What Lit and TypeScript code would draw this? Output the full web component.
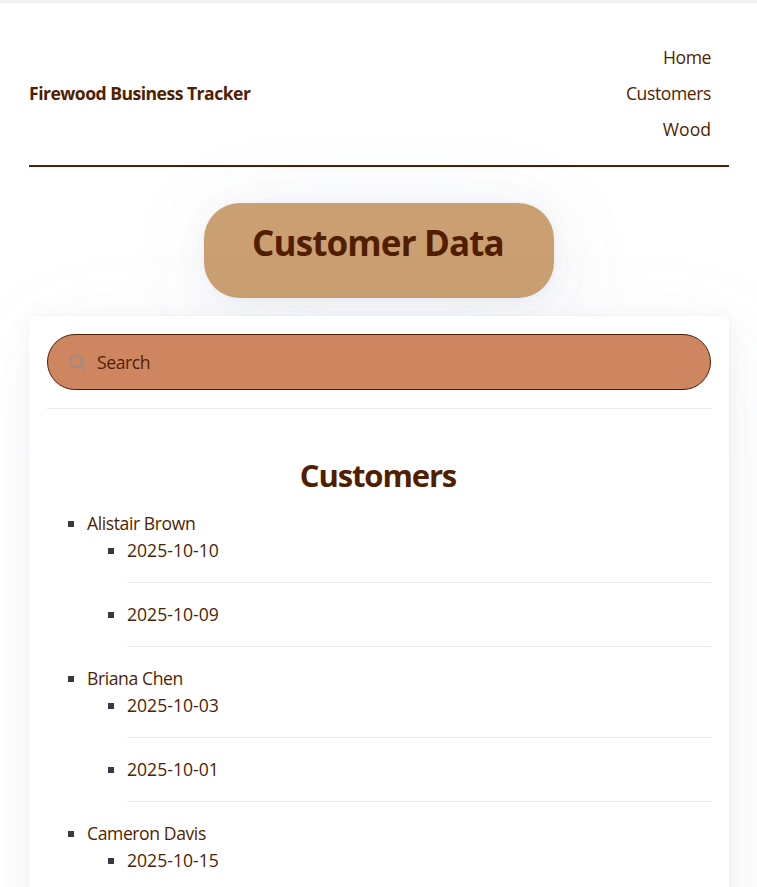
import { LitElement, html, css } from "lit";
import { customElement } from "lit/decorators.js";

interface Customer {
  name: string;
  dates: string[];
}

const customers: Customer[] = [
  { name: "Alistair Brown", dates: ["2025-10-10", "2025-10-09"] },
  { name: "Briana Chen", dates: ["2025-10-03", "2025-10-01"] },
  { name: "Cameron Davis", dates: ["2025-10-15"] },
];

@customElement("app-root")
export class AppRoot extends LitElement {
  static styles = css`
    :host {
      display: block;
      box-sizing: border-box;
      height: 887px;
      overflow: hidden;
      background: #fff;
      border-top: 2px solid #f5f5f5;
      box-shadow: inset 0 1px #ebebeb;
      padding: 37px 28px 0 29px;
      color: #511e00;
      font: 400 17.6px/27px "Open Sans", "Noto Sans", sans-serif;
      --shadow: 0.261px 0.522px 3.132px rgba(129, 145, 181, 0.01698),
        0.603px 1.206px 7.236px rgba(129, 145, 181, 0.024),
        1.125px 2.25px 13.5px rgba(129, 145, 181, 0.03),
        2.025px 4.05px 24.3px rgba(129, 145, 181, 0.036),
        3.753px 7.506px 45.036px rgba(129, 145, 181, 0.04302),
        9px 18px 108px rgba(129, 145, 181, 0.06),
        0 0 0 1.125px rgba(129, 145, 181, 0.015);
    }
    .header {
      display: flex;
      justify-content: space-between;
      align-items: center;
      padding-bottom: 18px;
      border-bottom: 2px solid #511e00;
    }
    .brand { font-weight: 700; letter-spacing: -0.53px; }
    .nav {
      display: flex;
      flex-direction: column;
      align-items: flex-end;
      gap: 9px;
      padding: 5px 18px 4px 0;
    }
    .home, .customers, .search { letter-spacing: -0.42px; }
    .title {
      box-sizing: border-box;
      width: 350px;
      height: 95px;
      margin: 36px auto 18px;
      padding: 19px 2px 0 0;
      border-radius: 36px;
      background: #ca9f71;
      box-shadow: var(--shadow), 0 4px 80px 20px rgba(129, 145, 181, 0.04);
      text-align: center;
      font-size: 35px;
      line-height: 41px;
      font-weight: 700;
      letter-spacing: -0.86px;
    }
    .card {
      position: relative;
      box-sizing: border-box;
      min-height: 700px;
      padding: 18px;
      border-radius: 4.5px;
      background: #fff;
      box-shadow: var(--shadow);
    }
    .search {
      display: flex;
      align-items: center;
      box-sizing: border-box;
      height: 56px;
      padding-left: 20px;
      border: 1px solid #511e00;
      border-radius: 28px;
      background: #ce8661;
    }
    .icon { width: 18px; height: 18px; margin-right: 11px; }
    .rule { height: 1px; margin: 18px 0; background: #e7eaf0; }
    .subtitle {
      margin: 47px 0 16px;
      padding-right: 2px;
      text-align: center;
      font-size: 31px;
      line-height: 38px;
      font-weight: 700;
      letter-spacing: -1.12px;
    }
    .list { list-style: none; margin: 0; padding: 0 0 0 40px; }
    .name { letter-spacing: -0.42px; }
    .item::before {
      content: "";
      display: inline-block;
      width: 6px;
      height: 6px;
      margin: 0 13px 0 -19px;
      vertical-align: 3px;
      background: #373c44;
    }
  `;

  render() {
    return html`
      <header class="header">
        <span class="brand">Firewood Business Tracker</span>
        <nav class="nav">
          <span class="home">Home</span>
          <span class="customers">Customers</span>
          <span class="wood">Wood</span>
        </nav>
      </header>
      <div class="title">Customer Data</div>
      <main class="card">
        <div class="search">
          <svg class="icon" viewBox="0 0 24 24" fill="none" stroke="#968c8f" stroke-width="2" stroke-linecap="round" stroke-linejoin="round" shape-rendering="geometricPrecision">
            <circle cx="11" cy="11" r="8.2"></circle>
            <path d="M22 22l-5.2-5.2"></path>
          </svg>
          <span>Search</span>
        </div>
        <div class="rule"></div>
        <div class="subtitle">Customers</div>
        <ul class="list">
          ${customers.map(
            (c) => html`<li class="item"><span class="name">${c.name}</span>
              <ul class="list">
                ${c.dates.map((d) => html`<li class="item"><span class="date">${d}</span><div class="rule"></div></li>`)}
              </ul>
            </li>`
          )}
        </ul>
      </main>
    `;
  }
}
